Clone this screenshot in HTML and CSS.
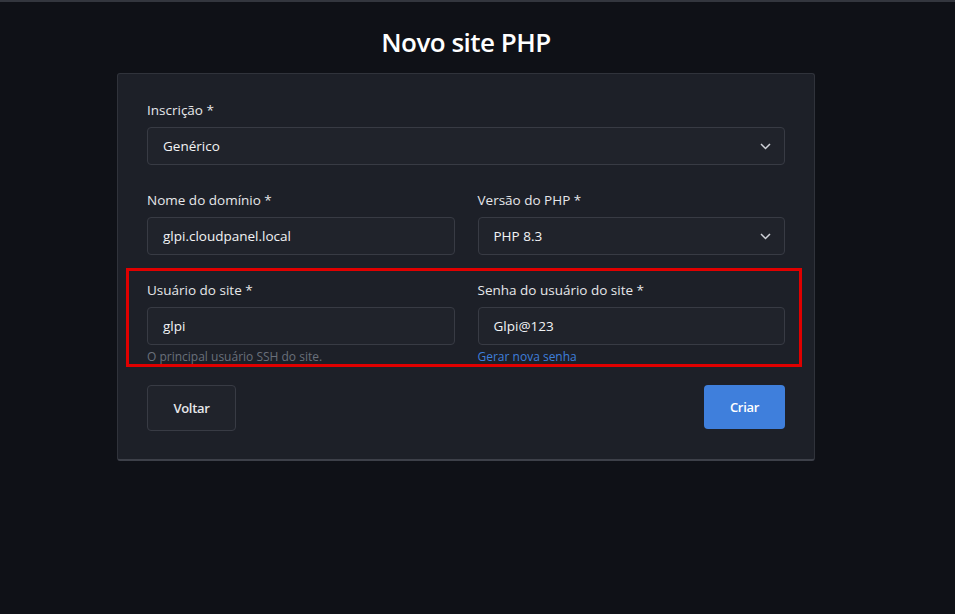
FILE: index.html
```
<!DOCTYPE html>
<html lang="pt">
<head>
<meta charset="utf-8">
<title>Novo site PHP</title>
<link rel="stylesheet" href="styles.css">
</head>
<body>
<div class="topline"></div>
<main class="page">
  <h1 class="title">Novo site PHP</h1>
  <form class="card">
    <div class="group">
      <label class="label">Inscrição *</label>
      <div class="field select">
        <span>Genérico</span>
        <svg class="chev" width="11" height="7" viewBox="0 0 11 7"><path d="M1 1 L5.5 5.5 L10 1" fill="none" stroke="#cfd2d8" stroke-width="1.5"/></svg>
      </div>
    </div>
    <div class="row group">
      <div class="col">
        <label class="label">Nome do domínio *</label>
        <div class="field"><span>glpi.cloudpanel.local</span></div>
      </div>
      <div class="col">
        <label class="label">Versão do PHP *</label>
        <div class="field select">
          <span>PHP 8.3</span>
          <svg class="chev" width="11" height="7" viewBox="0 0 11 7"><path d="M1 1 L5.5 5.5 L10 1" fill="none" stroke="#cfd2d8" stroke-width="1.5"/></svg>
        </div>
      </div>
    </div>
    <div class="row group last">
      <div class="col">
        <label class="label">Usuário do site *</label>
        <div class="field"><span>glpi</span></div>
        <div class="help">O principal usuário SSH do site.</div>
      </div>
      <div class="col">
        <label class="label">Senha do usuário do site *</label>
        <div class="field"><span>Glpi@123</span></div>
        <a class="link">Gerar nova senha</a>
      </div>
      <div class="highlight"></div>
    </div>
    <div class="actions">
      <button type="button" class="btn back">Voltar</button>
      <button type="button" class="btn primary">Criar</button>
    </div>
  </form>
</main>
</body>
</html>
```
FILE: styles.css
```
html, body {
  margin: 0;
  padding: 0;
  background: #0f1117;
  font-family: "Open Sans", "Noto Sans", sans-serif;
  color: #e8e9ec;
}
.topline {
  height: 2px;
  background: #33363e;
}
.page {
  width: 932px;
  display: flex;
  flex-direction: column;
  align-items: center;
}
.title {
  margin: 23px 0 0;
  height: 48px;
  font-size: 26px;
  line-height: 34px;
  font-weight: 600;
  color: #ffffff;
  letter-spacing: -0.5px;
}
.card {
  box-sizing: border-box;
  width: 698px;
  background: #1d2028;
  border: 1px solid #30333b;
  border-bottom: 2px solid #3d4049;
  border-radius: 3px;
  padding: 26px 29px 28px;
}
.group {
  margin-bottom: 25px;
}
.group.last {
  margin-bottom: 20px;
}
.row {
  display: grid;
  grid-template-columns: 1fr 1fr;
  column-gap: 23px;
  position: relative;
}
.label {
  display: block;
  font-size: 13.5px;
  line-height: 20px;
  margin-bottom: 7px;
  color: #e6e7ea;
}
.field {
  box-sizing: border-box;
  height: 38px;
  background: #20232b;
  border: 1px solid #383b44;
  border-radius: 4px;
  display: flex;
  align-items: center;
  justify-content: space-between;
  padding: 0 13px 0 15px;
  font-size: 13.5px;
  color: #f2f3f5;
}
.chev {
  display: block;
}
.help {
  margin-top: 4px;
  font-size: 12px;
  line-height: 16px;
  color: #6a707b;
}
.link {
  display: block;
  margin-top: 4px;
  font-size: 12px;
  line-height: 16px;
  color: #3f7fdc;
}
.highlight {
  position: absolute;
  left: -21px;
  right: -17px;
  top: -12px;
  bottom: -2px;
  border: 3px solid #e00000;
  pointer-events: none;
}
.actions {
  display: flex;
  justify-content: space-between;
  align-items: flex-start;
}
.btn {
  font-family: "Open Sans", "Noto Sans", sans-serif;
  font-size: 13px;
  font-weight: 600;
  border-radius: 4px;
  cursor: pointer;
  letter-spacing: -0.3px;
}
.back {
  width: 89px;
  height: 46px;
  background: #20232b;
  border: 1px solid #383b44;
  color: #e6e7ea;
}
.primary {
  width: 81px;
  height: 44px;
  background: #3f7fdc;
  border: none;
  color: #ffffff;
}
```
